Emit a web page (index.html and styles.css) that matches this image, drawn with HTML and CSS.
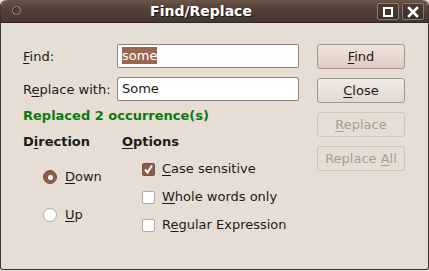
FILE: index.html
```html
<!DOCTYPE html>
<html lang="en">
<head>
    <meta charset="UTF-8">
    <title>Find/Replace</title>
    <link rel="stylesheet" href="styles.css">
</head>
<body>
    <div class="window">
        <div class="titlebar">
            <span class="menu-dot"></span>
            <span class="title">Find/Replace</span>
            <div class="wm-buttons">
                <span class="wm-btn"><span class="max-box"></span></span>
                <span class="wm-btn">
                    <svg width="12" height="12" viewBox="0 0 12 12">
                        <path d="M2 2 L10 10 M10 2 L2 10" stroke="#fff" stroke-width="2.6" stroke-linecap="square"/>
                    </svg>
                </span>
            </div>
        </div>

        <div class="content">
            <div class="form">
                <div class="field">
                    <label class="field-label"><u>F</u>ind:</label>
                    <div class="entry"><span class="selected">some</span></div>
                </div>
                <div class="field">
                    <label class="field-label">R<u>e</u>place with:</label>
                    <div class="entry">Some</div>
                </div>

                <div class="status">Replaced 2 occurrence(s)</div>

                <div class="groups">
                    <div class="group direction">
                        <div class="group-title">D<u>i</u>rection</div>
                        <div class="radios">
                            <div class="option"><span class="radio checked"></span><span><u>D</u>own</span></div>
                            <div class="option"><span class="radio"></span><span><u>U</u>p</span></div>
                        </div>
                    </div>
                    <div class="group options">
                        <div class="group-title"><u>O</u>ptions</div>
                        <div class="checks">
                            <div class="option">
                                <span class="check checked">
                                    <svg width="11" height="11" viewBox="0 0 11 11">
                                        <path d="M2 5.5 L4.5 8.5 L9 1.5" fill="none" stroke="#fff" stroke-width="2"/>
                                    </svg>
                                </span>
                                <span><u>C</u>ase sensitive</span>
                            </div>
                            <div class="option"><span class="check"></span><span><u>W</u>hole words only</span></div>
                            <div class="option"><span class="check"></span><span>R<u>e</u>gular Expression</span></div>
                        </div>
                    </div>
                </div>
            </div>

            <div class="buttons">
                <button class="btn default"><u>F</u>ind</button>
                <button class="btn"><u>C</u>lose</button>
                <button class="btn" disabled><u>R</u>eplace</button>
                <button class="btn" disabled>Replace <u>A</u>ll</button>
            </div>
        </div>
    </div>
</body>
</html>
```

FILE: styles.css
```css
body {
    margin: 0;
    background: #e6ded5;
    font-family: "DejaVu Sans", sans-serif;
    font-size: 13px;
    color: #1e1a17;
}

u {
    text-decoration: underline;
    text-underline-offset: 2px;
    text-decoration-thickness: 1px;
}

.window {
    width: 429px;
    height: 270px;
    box-sizing: border-box;
    background: #e6ded5;
    border: 1px solid #3c342f;
    border-top: none;
    border-radius: 6px 6px 3px 3px;
    overflow: hidden;
}

.titlebar {
    height: 22px;
    position: relative;
    display: flex;
    align-items: center;
    justify-content: center;
    padding: 0 52px 0 25px;
    background: linear-gradient(#6b5447, #54423a 40%, #45362f);
    border-bottom: 1px solid #2e2621;
    border-radius: 6px 6px 0 0;
}

.menu-dot {
    position: absolute;
    left: 11px;
    top: 6px;
    width: 7px;
    height: 7px;
    border-radius: 50%;
    border: 1px solid #a08e82;
    box-shadow: inset 1px 1px 1px #2e2420;
}

.title {
    color: #fff;
    font-weight: bold;
    font-size: 14px;
    text-shadow: 1px 1px 1px #1a1512;
}

.wm-buttons {
    position: absolute;
    right: 4px;
    top: 3px;
    display: flex;
    gap: 3px;
}

.wm-btn {
    width: 20px;
    height: 15px;
    border: 1px solid #8c7a6e;
    border-radius: 2px;
    background: linear-gradient(#4a3a32, #3e3029);
    display: flex;
    align-items: center;
    justify-content: center;
}

.max-box {
    width: 6px;
    height: 6px;
    border: 2px solid #fff;
}

.content {
    display: flex;
    padding: 21px 0 0 22px;
}

.form {
    width: 277px;
}

.field {
    display: flex;
    align-items: center;
    margin-bottom: 9px;
}

.field-label {
    width: 94px;
}

.entry {
    width: 182px;
    height: 24px;
    box-sizing: border-box;
    background: #fff;
    border: 1px solid #8e8075;
    border-radius: 2px;
    padding: 2px 4px;
    line-height: 18px;
}

.selected {
    background: #9a6650;
    color: #fff;
    padding: 1px 0;
}

.status {
    margin-top: -2px;
    line-height: 16px;
    color: #0b7a0b;
    font-weight: bold;
}

.groups {
    display: flex;
    margin-top: 10px;
}

.group-title {
    font-weight: bold;
    line-height: 16px;
}

.direction {
    width: 99px;
}

.option {
    display: flex;
    align-items: center;
    line-height: 16px;
}

.radios {
    padding: 19px 0 0 20px;
    display: flex;
    flex-direction: column;
    gap: 22px;
}

.radio {
    width: 12px;
    height: 12px;
    border: 1px solid #b7aa9f;
    border-radius: 50%;
    background: #fff;
    margin-right: 8px;
    position: relative;
}

.radio.checked {
    background: #8f5e48;
    border-color: #7a4f3c;
}

.radio.checked::after {
    content: "";
    position: absolute;
    left: 3.5px;
    top: 3.5px;
    width: 5px;
    height: 5px;
    border-radius: 50%;
    background: #fff;
}

.checks {
    padding: 11px 0 0 20px;
    display: flex;
    flex-direction: column;
    gap: 12px;
}

.check {
    width: 11px;
    height: 11px;
    border: 1px solid #b5a89d;
    border-radius: 2px;
    background: #fff;
    margin-right: 7px;
    display: flex;
    align-items: center;
    justify-content: center;
}

.check.checked {
    background: #8f5e48;
    border-color: #7a4f3c;
}

.buttons {
    display: flex;
    flex-direction: column;
    gap: 9px;
    margin-left: 17px;
}

.btn {
    width: 88px;
    height: 25px;
    padding: 0;
    font-family: "DejaVu Sans", sans-serif;
    font-size: 13px;
    color: #1e1a17;
    border: 1px solid #a5968a;
    border-radius: 3px;
    background: linear-gradient(#f1ece7, #e2d8cf);
}

.btn.default {
    background: linear-gradient(#f0e3dc, #dfcdc3);
}

.btn:disabled {
    color: #aa9c8f;
    border-color: #cfc4ba;
    background: #e6ded5;
}
```
